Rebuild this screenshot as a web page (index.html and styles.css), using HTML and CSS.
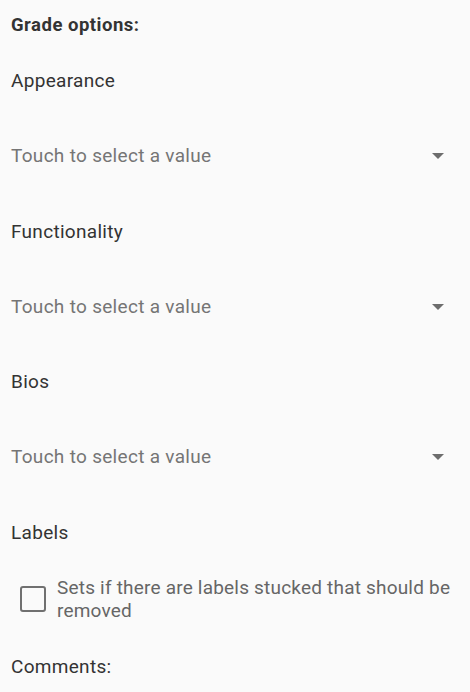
FILE: index.html
```html
<!DOCTYPE html>
<html>
<head>
<meta charset="utf-8">
<link rel="stylesheet" href="styles.css">
</head>
<body>
<div class="form">
  <div class="heading">Grade options:</div>
  <div class="label">Appearance</div>
  <div class="select"><span class="placeholder">Touch to select a value</span><span class="caret"></span></div>
  <div class="label">Functionality</div>
  <div class="select"><span class="placeholder">Touch to select a value</span><span class="caret"></span></div>
  <div class="label">Bios</div>
  <div class="select"><span class="placeholder">Touch to select a value</span><span class="caret"></span></div>
  <div class="label">Labels</div>
  <div class="check-row">
    <span class="checkbox"></span>
    <span class="check-text">Sets if there are labels stucked that should be removed</span>
  </div>
  <div class="label comments">Comments:</div>
</div>
</body>
</html>
```
FILE: styles.css
```css
html, body {
  margin: 0;
  padding: 0;
  background: #fafafa;
}
body {
  font-family: Roboto, "Noto Sans", sans-serif;
  width: 470px;
  height: 692px;
  overflow: hidden;
}
.form {
  padding: 0 11px;
  display: flex;
  flex-direction: column;
}
.heading {
  font-weight: bold;
  font-size: 18.5px;
  letter-spacing: 0.5px;
  color: #333;
  height: 25px;
  line-height: 25px;
  margin-top: 13px;
}
.label {
  font-size: 19px;
  letter-spacing: 0.3px;
  color: #333;
  line-height: 24px;
  margin-top: 31px;
}
.select {
  display: flex;
  align-items: center;
  justify-content: space-between;
  height: 24px;
  margin-top: 51px;
}
.placeholder {
  font-size: 19px;
  letter-spacing: 0.3px;
  color: #757575;
  line-height: 24px;
}
.caret {
  width: 0;
  height: 0;
  border-left: 6px solid transparent;
  border-right: 6px solid transparent;
  border-top: 6px solid #6d6d6d;
  margin-right: 15px;
}
.select + .label {
  margin-top: 51.5px;
}
.check-row {
  display: flex;
  align-items: flex-start;
  margin-top: 32px;
  padding-left: 9px;
}
.checkbox {
  flex: none;
  width: 22px;
  height: 22px;
  border: 2px solid #707070;
  border-radius: 3px;
  margin-top: 9px;
  margin-right: 11px;
}
.check-text {
  font-size: 19px;
  letter-spacing: 0.2px;
  color: #666;
  line-height: 23px;
  margin-top: -1px;
}
.label.comments {
  margin-top: 33px;
}
```
